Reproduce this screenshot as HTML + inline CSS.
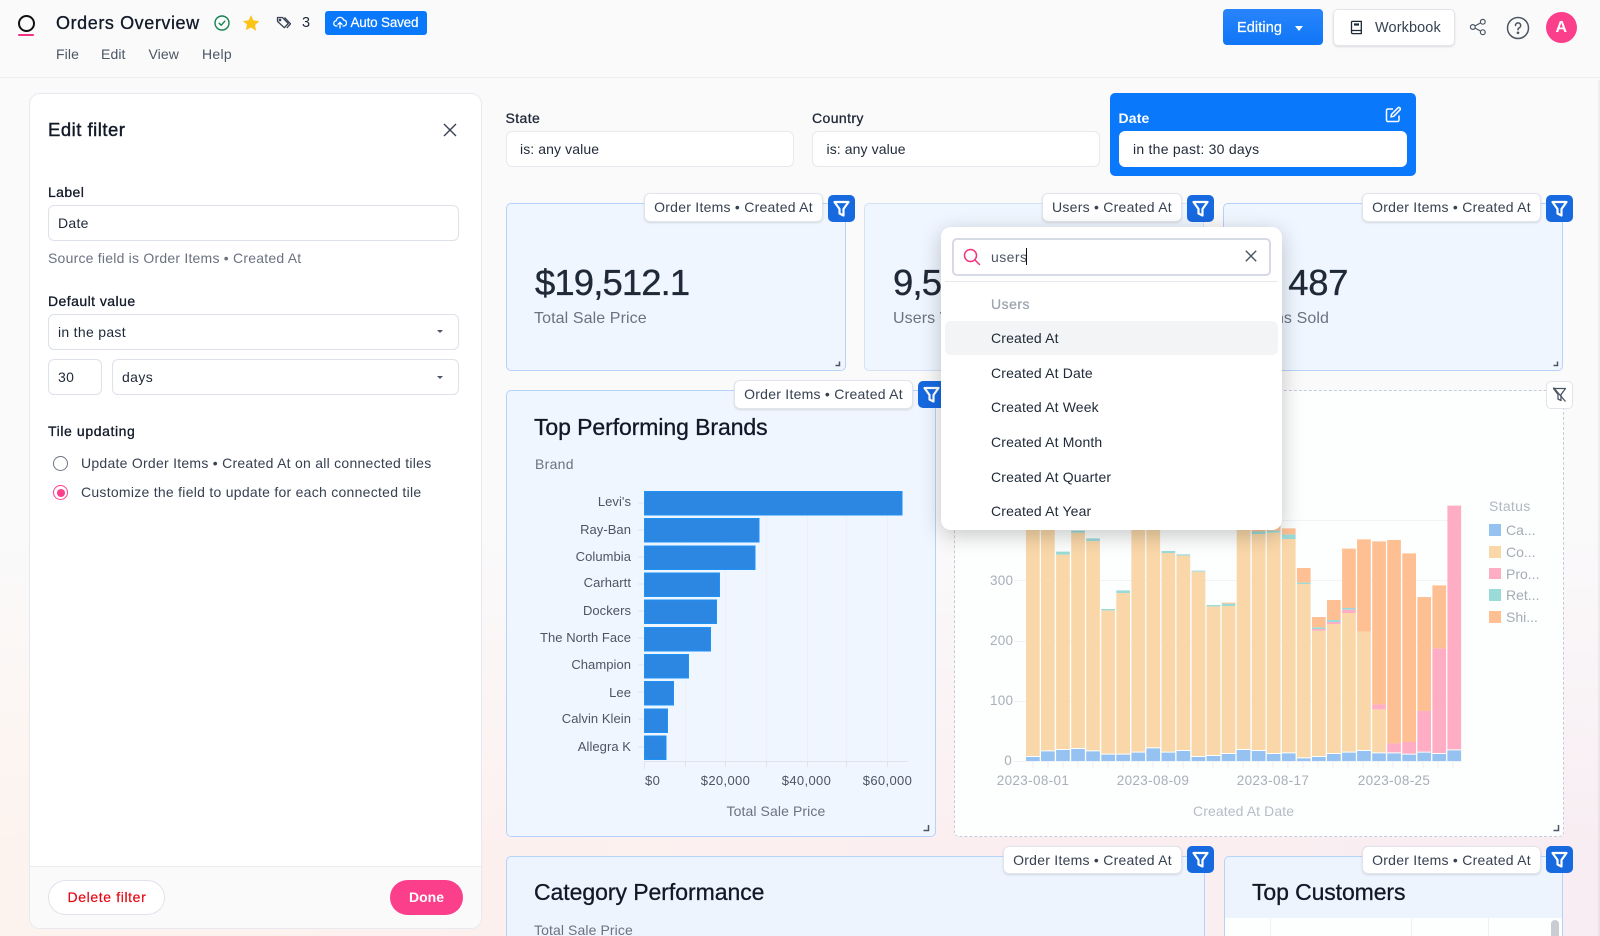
<!DOCTYPE html>
<html lang="en"><head><meta charset="utf-8"><title>Orders Overview</title>
<style>
html,body{margin:0;padding:0;width:1600px;height:936px;overflow:hidden}
#w{width:1600px;height:936px;overflow:hidden;position:relative;font-family:"Liberation Sans",sans-serif;color:#1f2937;filter:blur(.3px);background:linear-gradient(180deg,rgba(250,250,251,1) 0,rgba(250,250,251,1) 520px,rgba(250,250,251,0) 850px),linear-gradient(90deg,#fdf3ee,#fbeef0 60%,#f8edf2)}
.t{position:absolute;white-space:nowrap;line-height:20px;font-size:14px;letter-spacing:.25px}
.m{-webkit-text-stroke:.3px currentColor}
.b{position:absolute;box-sizing:border-box}
.inp{position:absolute;box-sizing:border-box;background:#fff;border:1.5px solid #dde1ea;border-radius:6px}
.tile{position:absolute;box-sizing:border-box;background:#f0f6ff;border:1.5px solid #b5d2fb;border-radius:5px}
.chip{position:absolute;box-sizing:border-box;height:29px;background:#fff;border:1px solid #e1e4ea;border-radius:6px;box-shadow:0 1px 2px rgba(0,0,0,.12);font-size:14px;line-height:27px;text-align:center;color:#374151;white-space:nowrap;letter-spacing:.25px}
.fb{position:absolute;width:27px;height:27px;background:#1769e0;border-radius:5px}
.fb svg{position:absolute;left:0;top:0}
.h2{font-size:23px;color:#111827;letter-spacing:-.08px;line-height:28px}
.it{left:991px;color:#1f2937;letter-spacing:.15px}
.bl{width:120px;text-align:right;left:511px;color:#4b5563;font-size:13px;letter-spacing:.05px}
.ax{font-size:13px;color:#4b5563;letter-spacing:.35px;width:90px;text-align:center}
.gx{font-size:13.5px;color:#a9aeb8;letter-spacing:.35px;width:90px;text-align:center}
.lg{font-size:14px;color:#a6abb5;left:1506px;letter-spacing:0}
.sw{position:absolute;left:1489px;width:11.5px;height:11.5px}
</style></head><body><div id="w">

<!-- header -->
<div class="b" style="left:0;top:0;width:1600px;height:78px;background:#fafafb;border-bottom:1.5px solid #eceef1"></div>
<div class="b" style="left:17.5px;top:14.5px;width:17px;height:17px;border:2.5px solid #111;border-radius:50%"></div>
<div class="b" style="left:18px;top:33.5px;width:16px;height:2px;background:#f4317f;border-radius:1px"></div>
<div class="t m" style="left:56px;top:13px;font-size:18px;color:#111827;letter-spacing:.58px">Orders Overview</div>
<svg style="position:absolute;left:214px;top:15px" width="16" height="16" viewBox="0 0 16 16" fill="none" stroke="#14824f" stroke-width="1.4"><circle cx="8" cy="8" r="7"/><path d="M5.2 8.2l2 2 3.6-4" stroke-linecap="round" stroke-linejoin="round"/></svg>
<svg style="position:absolute;left:242px;top:14px" width="18" height="18" viewBox="0 0 24 24"><path fill="#fcc419" d="M12 1.5l3.3 7 7.7 1-5.6 5.3 1.4 7.7L12 18l-6.800 3.500 1.400-7.700L1 9.500l7.700-1z"/></svg>
<svg style="position:absolute;left:275px;top:14px" width="18" height="18" viewBox="0 0 18 18" fill="none" stroke="#374151" stroke-width="1.300" stroke-linejoin="round"><path d="M2.500 3.500h5l5.800 6-4 4.200-6.800-6.300z"/><path d="M9.500 3.500l6 6.300-3.700 4.200"/><circle cx="5" cy="6" r=".7"/></svg>
<div class="t" style="left:302px;top:13px;font-size:14.500px;color:#1f2937">3</div>
<div class="b" style="left:324.500px;top:11px;width:102px;height:23.500px;background:#0a78fa;border-radius:3px"></div>
<svg style="position:absolute;left:333px;top:15px" width="14" height="15" viewBox="0 0 14 15" fill="none" stroke="#fff" stroke-width="1.300" stroke-linejoin="round" stroke-linecap="round"><path d="M4 11H3.500a2.600 2.600 0 0 1-.3-5.200A3.800 3.800 0 0 1 10.600 5 3 3 0 0 1 10.500 11H10"/><path d="M7 13V7.500M5 9.300l2-2 2 2"/></svg>
<div class="t m" style="left:350.500px;top:13px;color:#fff;font-size:13.500px;letter-spacing:-.2px;-webkit-text-stroke:.2px #fff">Auto Saved</div>
<div class="t" style="left:56px;top:44px;color:#4b5563;letter-spacing:.1px">File</div>
<div class="t" style="left:101px;top:44px;color:#4b5563;letter-spacing:.1px">Edit</div>
<div class="t" style="left:148.500px;top:44px;color:#4b5563;letter-spacing:.1px">View</div>
<div class="t" style="left:202px;top:44px;color:#4b5563;letter-spacing:.3px">Help</div>

<div class="b" style="left:1223px;top:9px;width:100px;height:36px;background:linear-gradient(180deg,#2884fb,#0f76f7);border-radius:4px"></div>
<div class="t m" style="left:1237px;top:17.500px;color:#fff;font-size:14.500px;letter-spacing:.1px;-webkit-text-stroke:.2px #fff">Editing</div>
<div class="b" style="left:1295px;top:25.500px;width:0;height:0;border-left:4.500px solid transparent;border-right:4.500px solid transparent;border-top:5px solid #fff"></div>
<div class="b" style="left:1332.500px;top:8.500px;width:122.500px;height:37px;background:#fff;border:1px solid #e3e5ea;border-radius:5px;box-shadow:0 1px 2px rgba(0,0,0,.12)"></div>
<svg style="position:absolute;left:1349px;top:19.500px" width="15" height="15" viewBox="0 0 15 15" fill="none" stroke="#1f2937" stroke-width="1.300"><path d="M2.500 11.800V2.200q0-.8.800-.8h9v12.200h-8.800q-1 0-1-1.800q0-1.300 1-1.300h8.800"/><path d="M5 4.500h5" stroke-width="2.200"/></svg>
<div class="t" style="left:1375px;top:17.500px;color:#374151;font-size:14.500px;letter-spacing:.1px">Workbook</div>
<svg style="position:absolute;left:1469px;top:18px" width="18" height="18" viewBox="0 0 18 18" fill="none" stroke="#4b5563" stroke-width="1.200"><circle cx="3.800" cy="9" r="2.400"/><circle cx="13.800" cy="3.800" r="2.400"/><circle cx="13.800" cy="14.200" r="2.400"/><path d="M6 7.900l5.700-3M6 10.100l5.700 3"/></svg>
<svg style="position:absolute;left:1506px;top:15.500px" width="24" height="24" viewBox="0 0 24 24" fill="none" stroke="#4b5563" stroke-width="1.500"><circle cx="12" cy="12" r="10.500"/><path d="M9.500 9.500a2.600 2.600 0 1 1 3.700 2.300q-1.200.6-1.200 1.900" stroke-linecap="round"/><circle cx="12" cy="16.800" r=".6" fill="#4b5563"/></svg>
<div class="b" style="left:1545.500px;top:11.500px;width:31.500px;height:31.500px;border-radius:50%;background:#fb3f8b;color:#fff;font-weight:bold;font-size:16px;line-height:32px;text-align:center">A</div>
<div class="b" style="left:1597px;top:80px;width:3px;height:856px;background:linear-gradient(90deg,rgba(0,0,0,0),rgba(0,0,0,.07))"></div>

<!-- left panel -->
<div class="b" style="left:29px;top:92.500px;width:453px;height:836px;background:#fff;border:1.500px solid #e6e9ef;border-radius:11px;overflow:hidden">
 <div class="b" style="left:0;top:772px;width:451px;height:62px;background:#fafafb;border-top:1.500px solid #e8ebf0"></div>
</div>
<div class="t m" style="left:48px;top:120px;font-size:18.500px;color:#111827;letter-spacing:.5px;-webkit-text-stroke:.4px #111827">Edit filter</div>
<svg style="position:absolute;left:443px;top:123px" width="14" height="14" viewBox="0 0 14 14" stroke="#374151" stroke-width="1.400"><path d="M1 1l12 12M13 1L1 13"/></svg>
<div class="t m" style="left:48px;top:182px;color:#111827;letter-spacing:.4px">Label</div>
<div class="inp" style="left:48px;top:205px;width:410.500px;height:35.500px"></div>
<div class="t" style="left:58px;top:212.500px;color:#1f2937;letter-spacing:.3px">Date</div>
<div class="t" style="left:48px;top:248px;color:#6b7280;letter-spacing:.22px">Source field is Order Items • Created At</div>
<div class="t m" style="left:48px;top:291px;color:#111827;letter-spacing:.45px">Default value</div>
<div class="inp" style="left:48px;top:313.500px;width:410.500px;height:36px"></div>
<div class="t" style="left:58px;top:321.500px;color:#1f2937;letter-spacing:.3px">in the past</div>
<div class="b" style="left:436.500px;top:329.500px;width:0;height:0;border-left:3px solid transparent;border-right:3px solid transparent;border-top:3.500px solid #4b5563"></div>
<div class="inp" style="left:48px;top:359px;width:54px;height:36px"></div>
<div class="t" style="left:58px;top:367px;color:#1f2937;letter-spacing:.4px">30</div>
<div class="inp" style="left:111.500px;top:359px;width:347px;height:36px"></div>
<div class="t" style="left:122px;top:367px;color:#1f2937;letter-spacing:.4px">days</div>
<div class="b" style="left:436.500px;top:375.500px;width:0;height:0;border-left:3px solid transparent;border-right:3px solid transparent;border-top:3.500px solid #4b5563"></div>
<div class="t m" style="left:48px;top:421px;color:#111827;letter-spacing:.6px">Tile updating</div>
<div class="b" style="left:53px;top:455.500px;width:15px;height:15px;border:1.500px solid #6f7580;border-radius:50%;background:#fff"></div>
<div class="t" style="left:81px;top:453px;color:#374151;letter-spacing:.26px">Update Order Items • Created At on all connected tiles</div>
<div class="b" style="left:53px;top:485px;width:15px;height:15px;border:1.500px solid #fb3f8b;border-radius:50%;background:#fff"></div>
<div class="b" style="left:56.500px;top:488.500px;width:8px;height:8px;border-radius:50%;background:#fb3f8b"></div>
<div class="t" style="left:81px;top:481.500px;color:#374151;letter-spacing:.27px">Customize the field to update for each connected tile</div>
<div class="b" style="left:48px;top:880px;width:117px;height:34.500px;background:#fff;border:1.500px solid #dfe3eb;border-radius:18px"></div>
<div class="t m" style="left:67.500px;top:887px;color:#e50914;letter-spacing:.62px;-webkit-text-stroke:.2px #e50914">Delete filter</div>
<div class="b" style="left:390px;top:880px;width:73px;height:34.500px;background:#fb3f8b;border-radius:18px"></div>
<div class="t" style="left:409px;top:887px;color:#fff;font-weight:bold;letter-spacing:0">Done</div>

<!-- filter bar -->
<div class="t m" style="left:505.500px;top:108px;color:#1f2937;letter-spacing:.4px">State</div>
<div class="inp" style="left:505.500px;top:131px;width:288px;height:36px;border-color:#e7e9ee"></div>
<div class="t" style="left:520px;top:139px;color:#1f2937;letter-spacing:.1px">is: any value</div>
<div class="t m" style="left:812px;top:108px;color:#1f2937;letter-spacing:.4px">Country</div>
<div class="inp" style="left:812px;top:131px;width:288px;height:36px;border-color:#e7e9ee"></div>
<div class="t" style="left:826.500px;top:139px;color:#1f2937;letter-spacing:.1px">is: any value</div>
<div class="b" style="left:1109.500px;top:92.500px;width:306.500px;height:83.500px;background:#0a78fa;border-radius:5px"></div>
<div class="t" style="left:1118.500px;top:107.500px;color:#fff;font-weight:bold;letter-spacing:.15px">Date</div>
<svg style="position:absolute;left:1385px;top:106px" width="17" height="17" viewBox="0 0 17 17" fill="none" stroke="#fff" stroke-width="1.500" stroke-linejoin="round"><path d="M8 3H3a1.500 1.500 0 0 0-1.500 1.500v9.500A1.500 1.500 0 0 0 3 15.500h9.500a1.500 1.500 0 0 0 1.500-1.500V9.500"/><path d="M6.500 8.300L13 1.800q.9-.8 1.800 0t.3 2L8.700 10.300l-2.700.6z"/></svg>
<div class="b" style="left:1118.500px;top:130.500px;width:288.500px;height:36.500px;background:#fff;border-radius:6px"></div>
<div class="t" style="left:1133px;top:139px;color:#1f2937;letter-spacing:.25px">in the past: 30 days</div>

<!-- KPI tiles -->
<div class="tile" style="left:505.500px;top:203px;width:340px;height:168px"></div>
<div class="tile" style="left:864px;top:203px;width:340px;height:168px;border-color:#d3e2f7"></div>
<div class="tile" style="left:1223px;top:203px;width:340px;height:168px"></div>
<div class="t" style="left:535px;top:273px;font-size:36.500px;line-height:20px;letter-spacing:-.9px;color:#1f2937;-webkit-text-stroke:.35px #1f2937">$19,512.1</div>
<div class="t" style="left:534px;top:309px;font-size:16px;color:#6b7280;letter-spacing:.1px">Total Sale Price</div>
<div class="t" style="left:893px;top:273px;font-size:36.500px;letter-spacing:-.85px;color:#1f2937;-webkit-text-stroke:.35px #1f2937">9,512</div>
<div class="t" style="left:893px;top:309px;font-size:16px;color:#6b7280;letter-spacing:.1px">Users Visited</div>
<div class="t" style="right:252px;top:273px;font-size:36.500px;letter-spacing:-.4px;color:#1f2937;-webkit-text-stroke:.35px #1f2937">487</div>
<div class="t" style="right:271px;top:309px;font-size:16px;color:#6b7280;letter-spacing:.1px">Items Sold</div>
<svg style="position:absolute;left:833px;top:359px" width="10" height="10" fill="none" stroke="#4b5563" stroke-width="1.500"><path d="M6.500 2.500v4h-4"/></svg>
<svg style="position:absolute;left:1551px;top:359px" width="10" height="10" fill="none" stroke="#4b5563" stroke-width="1.500"><path d="M6.500 2.500v4h-4"/></svg>

<div class="chip" style="left:644px;top:193px;width:179px">Order Items • Created At</div>
<div class="fb" style="left:828px;top:194.500px"><svg width="27" height="27" viewBox="0 0 27 27" fill="none" stroke="#fff" stroke-width="2.200" stroke-linejoin="round"><path d="M6.500 7h14l-5 7v6.500l-4-2V14z"/></svg></div>
<div class="chip" style="left:1042px;top:193px;width:140px">Users • Created At</div>
<div class="fb" style="left:1187px;top:194.500px"><svg width="27" height="27" viewBox="0 0 27 27" fill="none" stroke="#fff" stroke-width="2.200" stroke-linejoin="round"><path d="M6.500 7h14l-5 7v6.500l-4-2V14z"/></svg></div>
<div class="chip" style="left:1362px;top:193px;width:179px">Order Items • Created At</div>
<div class="fb" style="left:1546px;top:194.500px"><svg width="27" height="27" viewBox="0 0 27 27" fill="none" stroke="#fff" stroke-width="2.200" stroke-linejoin="round"><path d="M6.500 7h14l-5 7v6.500l-4-2V14z"/></svg></div>

<!-- Brands tile -->
<div class="tile" style="left:505.500px;top:390px;width:430px;height:447px"></div>
<div class="t h2 m" style="left:534px;top:413px">Top Performing Brands</div>
<div class="t" style="left:535px;top:453.500px;color:#6b7280;letter-spacing:.3px">Brand</div>
<svg style="position:absolute;left:0;top:0" width="1600" height="936">
 <g stroke="#edf0f5" stroke-width="1"><path d="M685.500 491V761M725.500 491V761M766.500 491V761M807.500 491V761M846.500 491V761M887.500 491V761"/></g>
 <g stroke="#dfe3ea" stroke-width="1"><path d="M644 761.500H908M644.500 761V769M685.500 761V767M725.500 761V767M766.500 761V767M807.500 761V767M846.500 761V767M887.500 761V767"/>
 <path d="M638 503H644M638 530H644M638 557H644M638 584H644M638 611H644M638 638H644M638 665H644M638 692H644M638 719H644M638 747H644"/></g>
 <g fill="#2c87e2" stroke="#1f92f5" stroke-width="1">
  <rect x="644.500" y="491.500" width="257.500" height="23.500"/>
  <rect x="644.500" y="518.500" width="114.500" height="23.500"/>
  <rect x="644.500" y="546" width="110.500" height="23.500"/>
  <rect x="644.500" y="573" width="75" height="23.500"/>
  <rect x="644.500" y="600" width="72" height="23.500"/>
  <rect x="644.500" y="627.500" width="66" height="23.500"/>
  <rect x="644.500" y="654.500" width="44" height="23.500"/>
  <rect x="644.500" y="681.500" width="29" height="23.500"/>
  <rect x="644.500" y="709" width="23" height="23.500"/>
  <rect x="644.500" y="736" width="21.500" height="23.500"/>
 </g>
</svg>
<div class="t bl" style="top:492px">Levi's</div>
<div class="t bl" style="top:519.500px">Ray-Ban</div>
<div class="t bl" style="top:546.500px">Columbia</div>
<div class="t bl" style="top:573px">Carhartt</div>
<div class="t bl" style="top:601px">Dockers</div>
<div class="t bl" style="top:628px">The North Face</div>
<div class="t bl" style="top:655px">Champion</div>
<div class="t bl" style="top:682.500px">Lee</div>
<div class="t bl" style="top:709px">Calvin Klein</div>
<div class="t bl" style="top:737px">Allegra K</div>
<div class="t" style="left:645px;top:771px;font-size:13px;color:#4b5563;letter-spacing:.35px">$0</div>
<div class="t ax" style="left:680.500px;top:771px">$20,000</div>
<div class="t ax" style="left:761.500px;top:771px">$40,000</div>
<div class="t ax" style="left:842.500px;top:771px">$60,000</div>
<div class="t" style="left:726.500px;top:801px;color:#6b7280;letter-spacing:.1px">Total Sale Price</div>
<svg style="position:absolute;left:921px;top:823px" width="10" height="10" fill="none" stroke="#4b5563" stroke-width="1.500"><path d="M7.500 2v5.500h-5"/></svg>
<div class="chip" style="left:734px;top:380px;width:179px;height:28.500px">Order Items • Created At</div>
<div class="fb" style="left:918px;top:381px;width:28px"><svg width="27" height="27" viewBox="0 0 27 27" fill="none" stroke="#fff" stroke-width="2.200" stroke-linejoin="round"><path d="M6.500 7h14l-5 7v6.500l-4-2V14z"/></svg></div>

<!-- Stacked chart tile -->
<div class="b" style="left:954px;top:390px;width:609.500px;height:447px;background:#fdfefe;border:1px dashed #c6cbd8;border-radius:5px"></div>
<svg style="position:absolute;left:0;top:0" width="1600" height="936">
 <g stroke="#f1f3f6" stroke-width="1"><path d="M1014 761.500H1462M1014 701.500H1462M1014 641.500H1462M1014 580.500H1462M1014 520.500H1462"/></g>
 <path stroke="#eceef2" stroke-width="1" d="M1033 761V768M1048 761V768M1063 761V768M1078 761V768M1093 761V768M1108 761V768M1123 761V768M1138 761V768M1153 761V768M1168 761V768M1183 761V768M1198 761V768M1213 761V768M1228 761V768M1243 761V768M1258 761V768M1273 761V768M1288 761V768M1303 761V768M1318 761V768M1333 761V768M1348 761V768M1363 761V768M1378 761V768M1393 761V768M1408 761V768M1423 761V768M1438 761V768M1453 761V768"/>
 <g transform="translate(0,380) scale(1,.33333)">
  <path fill="#95c2f0" d="M1026 1131h13.700V1143h-13.700zM1041 1114h13.700V1143h-13.700zM1056.100 1110h13.700V1143h-13.700zM1071.200 1107h13.700V1143h-13.700zM1086.200 1114h13.700V1143h-13.700zM1101.300 1124h13.700V1143h-13.700zM1116.300 1124h13.700V1143h-13.700zM1131.400 1118h13.700V1143h-13.700zM1146.400 1105h13.700V1143h-13.700zM1161.500 1118h13.700V1143h-13.700zM1176.500 1113h13.700V1143h-13.700zM1191.600 1131h13.700V1143h-13.700zM1206.600 1128h13.700V1143h-13.700zM1221.700 1122h13.700V1143h-13.700zM1236.700 1110h13.700V1143h-13.700zM1251.800 1113h13.700V1143h-13.700zM1266.800 1122h13.700V1143h-13.700zM1281.900 1120h13.700V1143h-13.700zM1296.900 1135h13.700V1143h-13.700zM1312 1131h13.700V1143h-13.700zM1327 1122h13.700V1143h-13.700zM1342.100 1118h13.700V1143h-13.700zM1357.100 1113h13.700V1143h-13.700zM1372.200 1120h13.700V1143h-13.700zM1387.200 1120h13.700V1143h-13.700zM1402.300 1124h13.700V1143h-13.700zM1417.300 1118h13.700V1143h-13.700zM1432.400 1122h13.700V1143h-13.700zM1447.400 1111h13.700V1143h-13.700z"/>
  <path fill="#f9d7a8" d="M1026 400h13.700V1128h-13.700zM1041 400h13.700V1111h-13.700zM1056.100 524h13.700V1107h-13.700zM1071.200 458h13.700V1104h-13.700zM1086.200 483h13.700V1111h-13.700zM1101.300 691h13.700V1121h-13.700zM1116.300 639h13.700V1121h-13.700zM1131.400 400h13.700V1115h-13.700zM1146.400 400h13.700V1102h-13.700zM1161.500 519h13.700V1115h-13.700zM1176.500 527h13.700V1110h-13.700zM1191.600 575h13.700V1128h-13.700zM1206.600 679h13.700V1125h-13.700zM1221.700 678h13.700V1119h-13.700zM1236.700 400h13.700V1107h-13.700zM1251.800 462h13.700V1110h-13.700zM1266.800 458h13.700V1119h-13.700zM1281.900 477h13.700V1117h-13.700zM1296.900 612h13.700V1132h-13.700zM1312 752h13.700V1128h-13.700zM1327 732h13.700V1119h-13.700zM1342.100 699h13.700V1115h-13.700zM1357.100 755h13.700V1110h-13.700zM1372.200 988h13.700V1117h-13.700z"/>
  <path fill="#ffadc5" d="M1312 747h13.700v5h-13.700zM1327 726h13.700v6h-13.700zM1342.100 689h13.700v10h-13.700zM1372.200 973h13.700v15h-13.700zM1387.200 1090h13.700V1117h-13.700zM1402.300 1086h13.700V1121h-13.700zM1417.300 993h13.700V1115h-13.700zM1432.400 805h13.700V1119h-13.700zM1447.400 377h13.700V1108h-13.700z"/>
  <path fill="#9adbd8" d="M1056.100 515h13.700v9h-13.700zM1071.200 452h13.700v6h-13.700zM1086.200 475h13.700v8h-13.700zM1101.300 687h13.700v4h-13.700zM1116.300 631h13.700v8h-13.700zM1161.500 513h13.700v6h-13.700zM1176.500 523h13.700v4h-13.700zM1191.600 572h13.700v3h-13.700zM1206.600 675h13.700v4h-13.700zM1221.700 671h13.700v7h-13.700zM1251.800 454h13.700v8h-13.700zM1266.800 452h13.700v6h-13.700zM1281.900 463h13.700v14h-13.700zM1296.900 608h13.700v4h-13.700zM1312 742h13.700v5h-13.700zM1327 720h13.700v6h-13.700zM1342.100 684h13.700v5h-13.700z"/>
  <path fill="#fec093" d="M1221.700 668h13.700v3h-13.700zM1251.800 440h13.700v14h-13.700zM1266.800 400h13.700v52h-13.700zM1281.900 445h13.700v18h-13.700zM1296.900 564h13.700v44h-13.700zM1312 711h13.700v31h-13.700zM1327 660h13.700v60h-13.700zM1342.100 506h13.700V684h-13.700zM1357.100 478h13.700V755h-13.700zM1372.200 484h13.700V973h-13.700zM1387.200 480h13.700V1090h-13.700zM1402.300 520h13.700V1086h-13.700zM1417.300 651h13.700V993h-13.700zM1432.400 616h13.700V805h-13.700z"/>
 </g>
</svg>
<div class="t" style="left:990px;width:22px;text-align:right;top:570.500px;font-size:13.500px;color:#a9aeb8">300</div>
<div class="t" style="left:990px;width:22px;text-align:right;top:631px;font-size:13.500px;color:#a9aeb8">200</div>
<div class="t" style="left:990px;width:22px;text-align:right;top:691px;font-size:13.500px;color:#a9aeb8">100</div>
<div class="t" style="left:990px;width:22px;text-align:right;top:751px;font-size:13.500px;color:#a9aeb8">0</div>
<div class="t gx" style="left:988px;top:771px">2023-08-01</div>
<div class="t gx" style="left:1108px;top:771px">2023-08-09</div>
<div class="t gx" style="left:1228px;top:771px">2023-08-17</div>
<div class="t gx" style="left:1349px;top:771px">2023-08-25</div>
<div class="t" style="left:1193px;top:801px;color:#b7bcc5;letter-spacing:.1px">Created At Date</div>
<div class="t" style="left:1489px;top:496px;color:#b2b7c1;letter-spacing:.3px">Status</div>
<div class="sw" style="top:524px;background:#95c2f0"></div><div class="t lg" style="top:520px">Ca...</div>
<div class="sw" style="top:546px;background:#f9d7a8"></div><div class="t lg" style="top:542px">Co...</div>
<div class="sw" style="top:567.500px;background:#ffadc5"></div><div class="t lg" style="top:564px">Pro...</div>
<div class="sw" style="top:589px;background:#9adbd8"></div><div class="t lg" style="top:585px">Ret...</div>
<div class="sw" style="top:611px;background:#fec093"></div><div class="t lg" style="top:607px">Shi...</div>
<svg style="position:absolute;left:1551px;top:823px" width="10" height="10" fill="none" stroke="#4b5563" stroke-width="1.500"><path d="M7.500 2v5.500h-5"/></svg>
<div class="b" style="left:1546px;top:381px;width:27px;height:27.500px;background:#fff;border:1px solid #e1e4ea;border-radius:5px"></div>
<svg style="position:absolute;left:1551px;top:386px" width="17" height="17" viewBox="0 0 17 17" fill="none" stroke="#4b5563" stroke-width="1.300" stroke-linejoin="round"><path d="M2.500 2.500h12l-4.500 6v6l-3-1.500V8.500z"/><path d="M2.500 1.500L14.500 15.500"/></svg>

<!-- bottom tiles -->
<div class="tile" style="left:505.500px;top:856px;width:699px;height:120px;background:#eef4fe"></div>
<div class="t h2 m" style="left:534px;top:878px;letter-spacing:-.05px">Category Performance</div>
<div class="t" style="left:534px;top:920px;color:#6b7280;letter-spacing:.1px">Total Sale Price</div>
<div class="chip" style="left:1003px;top:845.500px;width:179px;height:28.500px">Order Items • Created At</div>
<div class="fb" style="left:1187px;top:846px"><svg width="27" height="27" viewBox="0 0 27 27" fill="none" stroke="#fff" stroke-width="2.200" stroke-linejoin="round"><path d="M6.500 7h14l-5 7v6.500l-4-2V14z"/></svg></div>
<div class="tile" style="left:1223.500px;top:856px;width:339.500px;height:120px;background:#eef4fe"></div>
<div class="t h2 m" style="left:1252px;top:877.500px;letter-spacing:-.1px">Top Customers</div>
<div class="b" style="left:1224.500px;top:918px;width:337.500px;height:18px;background:#fdfefe"></div>
<div class="b" style="left:1270px;top:918px;width:1px;height:18px;background:#edf0f4"></div>
<div class="b" style="left:1411px;top:918px;width:1px;height:18px;background:#edf0f4"></div>
<div class="b" style="left:1488px;top:918px;width:1px;height:18px;background:#edf0f4"></div>
<div class="b" style="left:1551px;top:920px;width:8px;height:20px;background:#c9ccd2;border-radius:4px"></div>
<div class="chip" style="left:1362px;top:845.500px;width:179px;height:28.500px">Order Items • Created At</div>
<div class="fb" style="left:1546px;top:846px"><svg width="27" height="27" viewBox="0 0 27 27" fill="none" stroke="#fff" stroke-width="2.200" stroke-linejoin="round"><path d="M6.500 7h14l-5 7v6.500l-4-2V14z"/></svg></div>

<!-- dropdown -->
<div class="b" style="left:941px;top:227px;width:341px;height:303px;background:#fff;border-radius:10px;box-shadow:0 5px 22px rgba(0,0,0,.22)"></div>
<div class="b" style="left:952px;top:238px;width:319px;height:37.500px;background:#fff;border:2px solid #d6dae4;border-radius:5px"></div>
<svg style="position:absolute;left:963px;top:248px" width="18" height="18" viewBox="0 0 18 18" fill="none" stroke="#f4317f" stroke-width="1.500" stroke-linecap="round"><circle cx="7.500" cy="7.500" r="6"/><path d="M12 12l4.500 4.500"/></svg>
<div class="t" style="left:991px;top:246.500px;color:#4b5563;letter-spacing:.45px">users</div>
<div class="b" style="left:1025.500px;top:248px;width:1px;height:17px;background:#111"></div>
<svg style="position:absolute;left:1245px;top:250px" width="12" height="12" viewBox="0 0 12 12" stroke="#4b5563" stroke-width="1.400"><path d="M.8.8l10.400 10.400M11.200.8L.8 11.200"/></svg>
<div class="b" style="left:945px;top:280.500px;width:333px;height:1.500px;background:#e6e8ee"></div>
<div class="t m" style="left:991px;top:293.500px;color:#9ca3af;letter-spacing:.5px;-webkit-text-stroke:.25px #9ca3af">Users</div>
<div class="b" style="left:945px;top:321px;width:333px;height:34px;background:#f3f4f6;border-radius:6px"></div>
<div class="t it" style="top:328px">Created At</div>
<div class="t it" style="top:362.500px">Created At Date</div>
<div class="t it" style="top:397px">Created At Week</div>
<div class="t it" style="top:431.500px">Created At Month</div>
<div class="t it" style="top:466.500px">Created At Quarter</div>
<div class="t it" style="top:501px">Created At Year</div>
</div></body></html>
